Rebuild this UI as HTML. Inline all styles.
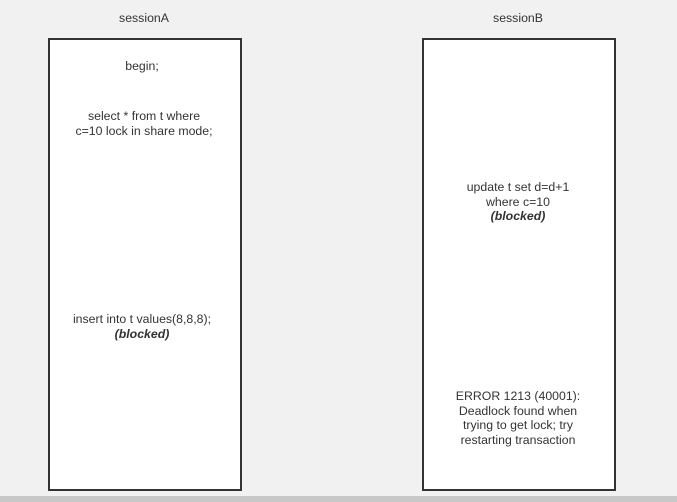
<!DOCTYPE html>
<html><head><meta charset="utf-8"><style>
html,body{margin:0;padding:0;width:677px;height:502px;background:#f1f1f1;overflow:hidden;position:relative;font-family:"Liberation Sans",sans-serif;font-size:12.3px;color:#333}
.box{position:absolute;top:38px;width:190px;height:449px;background:#fff;border:2px solid #333}
.t{position:absolute;width:200px;text-align:center;line-height:14.5px}
.a{left:44px}.b{left:418px}
.bar{position:absolute;left:0;top:496px;width:677px;height:6px;background:#c8c8c8}
b{font-style:italic}
</style></head><body>
<div class="t a" style="top:11px">sessionA</div>
<div class="t b" style="top:11px">sessionB</div>
<div class="box" style="left:48px"></div>
<div class="box" style="left:422px"></div>
<div class="t a" style="left:42px;top:59px">begin;</div>
<div class="t a" style="top:109px">select * from t where<br>c=10 lock in share mode;</div>
<div class="t a" style="left:42px;top:312px">insert into t values(8,8,8);<br><b>(blocked)</b></div>
<div class="t b" style="top:180px">update t set d=d+1<br>where c=10<br><b>(blocked)</b></div>
<div class="t b" style="top:389px">ERROR 1213 (40001):<br>Deadlock found when<br>trying to get lock; try<br>restarting transaction</div>
<div class="bar"></div>
</body></html>
